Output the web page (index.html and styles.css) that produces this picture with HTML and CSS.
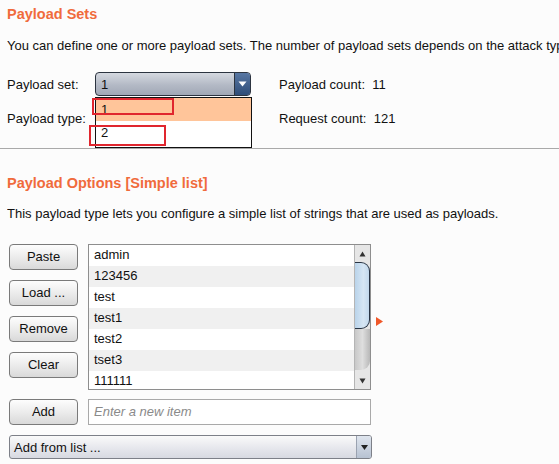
FILE: index.html
```html
<!DOCTYPE html>
<html>
<head>
<meta charset="utf-8">
<link rel="stylesheet" href="styles.css">
</head>
<body>
<div class="page">
  <section class="sets">
    <h2 class="title">Payload Sets</h2>
    <p class="desc">You can define one or more payload sets. The number of payload sets depends on the attack type defined in the Positions tab.</p>
    <div class="grid">
      <div class="lbl">Payload set:</div>
      <div class="combo-wrap">
        <div class="combo">
          <span class="combo-val">1</span>
          <span class="combo-btn"><svg width="9" height="6" viewBox="0 0 9 6"><path d="M0.5 0.5h8l-4 5z" fill="#fff"/></svg></span>
        </div>
        <div class="popup">
          <div class="opt sel">1</div>
          <div class="opt">2</div>
          <div class="mark m1"></div>
          <div class="mark m2"></div>
        </div>
      </div>
      <div class="stat">Payload count:&nbsp; 11</div>
      <div class="lbl">Payload type:</div>
      <div></div>
      <div class="stat">Request count:&nbsp; 121</div>
    </div>
  </section>
  <section class="opts">
    <h2 class="title">Payload Options [Simple list]</h2>
    <p class="desc">This payload type lets you configure a simple list of strings that are used as payloads.</p>
    <div class="listrow">
      <div class="btns">
        <button class="btn">Paste</button>
        <button class="btn">Load ...</button>
        <button class="btn">Remove</button>
        <button class="btn">Clear</button>
      </div>
      <div class="list">
        <div class="items">
          <div class="item">admin</div>
          <div class="item alt">123456</div>
          <div class="item">test</div>
          <div class="item alt">test1</div>
          <div class="item">test2</div>
          <div class="item alt">tset3</div>
          <div class="item">111111</div>
        </div>
        <div class="sbar">
          <div class="sarrow"><svg width="7" height="6" viewBox="0 0 7 6"><path d="M3.5 0.5l3 5h-6z" fill="#333"/></svg></div>
          <div class="strack">
            <div class="thumb"></div>
            <div class="rest"></div>
          </div>
          <div class="sarrow"><svg width="7" height="6" viewBox="0 0 7 6"><path d="M0.5 0.5h6l-3 5z" fill="#333"/></svg></div>
        </div>
      </div>
      <div class="tri"><svg width="7" height="9" viewBox="0 0 7 9"><path d="M0 0l7 4.5L0 9z" fill="#f0582a"/></svg></div>
    </div>
    <div class="addrow">
      <button class="btn">Add</button>
      <div class="input">Enter a new item</div>
    </div>
    <div class="fromlist">
      <span class="fl-val">Add from list ...</span>
      <span class="fl-btn"><svg width="7" height="5" viewBox="0 0 7 5"><path d="M0 0h7l-3.5 5z" fill="#222"/></svg></span>
    </div>
  </section>
</div>
</body>
</html>
```

FILE: styles.css
```css
* { box-sizing: border-box; }
html, body { margin: 0; padding: 0; }
body {
  background: #fcfcfc;
  font-family: "Liberation Sans", Arial, sans-serif;
  font-size: 13px;
  color: #111;
  width: 559px;
  height: 464px;
  overflow: hidden;
}
.page { width: 559px; }
.title {
  margin: 0;
  font-size: 14.5px;
  font-weight: bold;
  color: #f06b3c;
  line-height: 18px;
}
.desc {
  margin: 0;
  white-space: nowrap;
  overflow: hidden;
  line-height: 16px;
}
.sets {
  padding: 5px 0 0 7px;
  height: 149px;
  border-bottom: 1px solid #a9a9a9;
}
.sets .desc { margin-top: 15px; }
.grid {
  margin-top: 18px;
  display: grid;
  grid-template-columns: 88px 156px 1fr;
  column-gap: 0;
  grid-template-rows: 24px 24px;
  row-gap: 10px;
  align-items: center;
}
.grid > .combo-wrap { position: relative; height: 24px; }
.stat { padding-left: 28px; }
.combo {
  height: 24px;
  border: 1px solid #2c3440;
  border-radius: 4px;
  background: linear-gradient(#d5d9e0, #b3b9c5 55%, #a1a8b6);
  display: flex;
  align-items: center;
  overflow: hidden;
}
.combo-val { flex: 1; padding-left: 5px; }
.combo-btn {
  width: 16px;
  height: 100%;
  background: linear-gradient(#5877a3, #2f4d78);
  border-left: 1px solid #2c3440;
  display: flex;
  align-items: center;
  justify-content: center;
}
.popup {
  position: absolute;
  left: 0;
  top: 25px;
  width: 157px;
  height: 51px;
  border: 1px solid #111;
  background: #fff;
}
.opt { height: 23px; line-height: 23px; padding-left: 5px; }
.opt.sel { background: #ffc59a; }
.mark { position: absolute; border: 2px solid #e0262e; }
.m1 { left: -4px; top: 0px; width: 82px; height: 17px; }
.m2 { left: -7px; top: 27px; width: 77px; height: 21px; }

.opts { padding: 25px 0 0 7px; }
.opts .desc { margin-top: 14px; }
.listrow {
  margin-top: 22px;
  display: flex;
  align-items: flex-start;
}
.btns {
  display: flex;
  flex-direction: column;
  gap: 10px;
  padding-left: 2px;
  width: 81px;
}
.btn {
  width: 69px;
  height: 26px;
  border: 1px solid #7a7a7a;
  border-radius: 4px;
  background: linear-gradient(#fdfdfd, #ececec 50%, #d9d9d9);
  font-family: "Liberation Sans", Arial, sans-serif;
  font-size: 13px;
  color: #111;
  padding: 0 0 1px;
}
.list {
  width: 283px;
  height: 146px;
  border: 1px solid #8e8e8e;
  background: #fff;
  display: flex;
  overflow: hidden;
}
.items { flex: 1; padding-top: 0; }
.item { height: 21px; line-height: 20px; padding-left: 5px; }
.item.alt { background: #f0f0f0; }
.sbar {
  width: 16px;
  border-left: 1px solid #b5b5b5;
  background: #e6e6e6;
  display: flex;
  flex-direction: column;
}
.sarrow {
  height: 17px;
  display: flex;
  align-items: center;
  justify-content: center;
}
.strack { flex: 1; display: flex; flex-direction: column; }
.thumb {
  height: 67px;
  border: 1px solid #283444;
  border-left: none;
  border-radius: 0 9px 9px 0;
  background: linear-gradient(90deg, #b9d3ea, #d6e6f4 60%, #c2d8ec);
}
.rest {
  flex: 1;
  border-radius: 0 0 9px 0;
  background: linear-gradient(90deg, #c8c8c8, #dedede 50%, #b8b8b8);
  margin-bottom: 2px;
}
.tri { padding: 70px 0 0 5px; }
.addrow {
  margin-top: 9px;
  display: flex;
  align-items: center;
}
.addrow .btn { margin-left: 2px; }
.input {
  margin-left: 10px;
  width: 283px;
  height: 26px;
  border: 1px solid #a9a9a9;
  background: #fff;
  line-height: 24px;
  padding-left: 5px;
  color: #8a8a8a;
  font-style: italic;
}
.fromlist {
  margin-top: 10px;
  margin-left: 2px;
  width: 363px;
  height: 24px;
  border: 1px solid #7d8088;
  border-radius: 3px;
  background: linear-gradient(#fafafa, #e8e9ee 50%, #d7d9e1);
  display: flex;
  align-items: center;
  overflow: hidden;
}
.fl-val { flex: 1; padding-left: 4px; }
.fl-btn {
  width: 15px;
  height: 100%;
  border-left: 1px solid #9aa2b0;
  background: linear-gradient(#dfe5ee, #b7c2d2);
  display: flex;
  align-items: center;
  justify-content: center;
}
```
